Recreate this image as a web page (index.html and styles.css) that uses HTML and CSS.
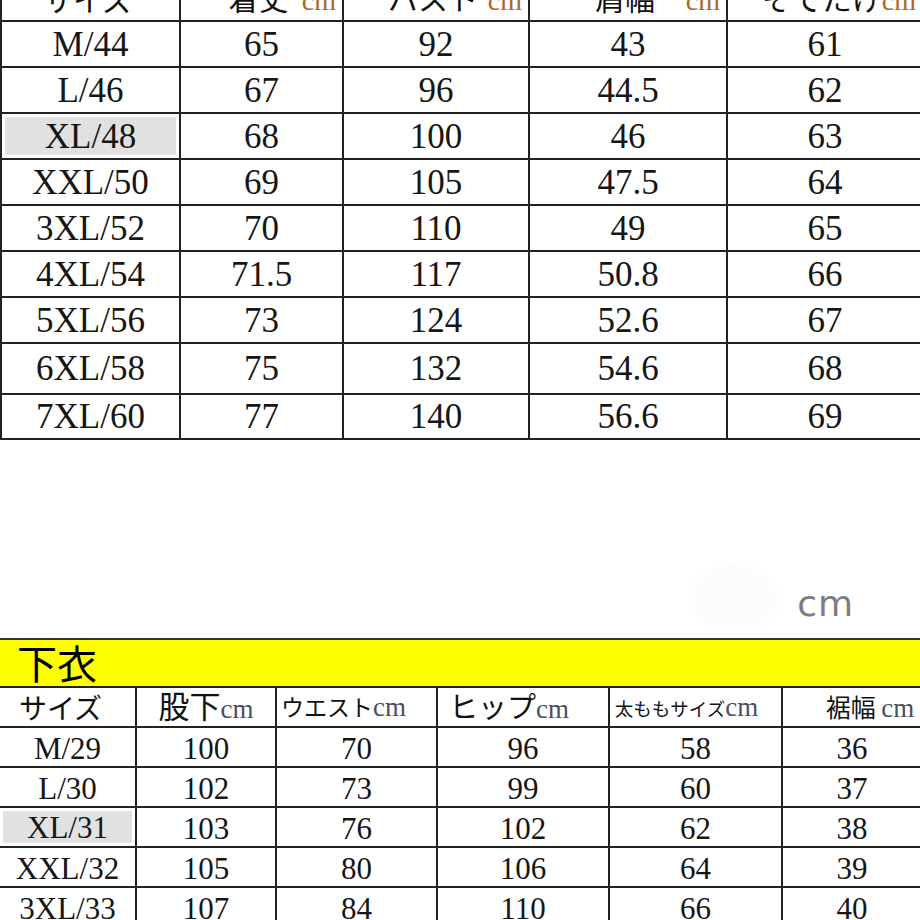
FILE: index.html
```html
<!DOCTYPE html>
<html lang="ja">
<head>
<meta charset="utf-8">
<title>サイズ表</title>
<link rel="stylesheet" href="styles.css">
</head>
<body>
<div class="page">
  <table class="chart chart-top">
    <colgroup>
      <col class="t1"><col class="t2"><col class="t3"><col class="t4"><col class="t5">
    </colgroup>
    <thead>
      <tr>
        <th><span class="hd"><span class="lbl">サイズ</span></span></th>
        <th><span class="hd"><span class="lbl">着丈</span><span class="unit">cm</span></span></th>
        <th><span class="hd"><span class="lbl">バスト</span><span class="unit">cm</span></span></th>
        <th><span class="hd"><span class="lbl">肩幅</span><span class="unit">cm</span></span></th>
        <th><span class="hd"><span class="lbl">そでたけ</span><span class="unit">cm</span></span></th>
      </tr>
    </thead>
    <tbody>
      <tr><td>M/44</td><td>65</td><td>92</td><td>43</td><td>61</td></tr>
      <tr><td>L/46</td><td>67</td><td>96</td><td>44.5</td><td>62</td></tr>
      <tr><td class="hl">XL/48</td><td>68</td><td>100</td><td>46</td><td>63</td></tr>
      <tr><td>XXL/50</td><td>69</td><td>105</td><td>47.5</td><td>64</td></tr>
      <tr><td>3XL/52</td><td>70</td><td>110</td><td>49</td><td>65</td></tr>
      <tr><td>4XL/54</td><td>71.5</td><td>117</td><td>50.8</td><td>66</td></tr>
      <tr><td>5XL/56</td><td>73</td><td>124</td><td>52.6</td><td>67</td></tr>
      <tr class="tall"><td>6XL/58</td><td>75</td><td>132</td><td>54.6</td><td>68</td></tr>
      <tr class="short"><td>7XL/60</td><td>77</td><td>140</td><td>56.6</td><td>69</td></tr>
    </tbody>
  </table>

  <div class="gap"><span class="gap-unit">cm</span></div>

  <div class="band">下衣</div>

  <table class="chart chart-bottom">
    <colgroup>
      <col class="b1"><col class="b2"><col class="b3"><col class="b4"><col class="b5"><col class="b6">
    </colgroup>
    <thead>
      <tr>
        <th class="h-size">サイズ</th>
        <th class="h-inseam">股下<span class="unit">cm</span></th>
        <th class="h-waist">ウエスト<span class="unit">cm</span></th>
        <th class="h-hip">ヒップ<span class="unit">cm</span></th>
        <th class="h-thigh">太ももサイズ<span class="unit">cm</span></th>
        <th class="h-hem">裾幅 <span class="unit">cm</span></th>
      </tr>
    </thead>
    <tbody>
      <tr><td>M/29</td><td>100</td><td>70</td><td>96</td><td>58</td><td>36</td></tr>
      <tr><td>L/30</td><td>102</td><td>73</td><td>99</td><td>60</td><td>37</td></tr>
      <tr><td class="hl">XL/31</td><td>103</td><td>76</td><td>102</td><td>62</td><td>38</td></tr>
      <tr><td>XXL/32</td><td>105</td><td>80</td><td>106</td><td>64</td><td>39</td></tr>
      <tr><td>3XL/33</td><td>107</td><td>84</td><td>110</td><td>66</td><td>40</td></tr>
    </tbody>
  </table>
</div>
</body>
</html>
```

FILE: styles.css
```css
html, body {
  margin: 0;
  padding: 0;
  background: #ffffff;
}

.page {
  width: 920px;
  height: 920px;
  overflow: hidden;
  background: #ffffff;
}

.chart {
  border-collapse: collapse;
  table-layout: fixed;
  color: #161616;
  font-family: "Liberation Serif", "Times New Roman", serif;
}

.chart th,
.chart td {
  border: 2px solid #222222;
  padding: 0;
  text-align: center;
  vertical-align: middle;
  white-space: nowrap;
  overflow: hidden;
  font-weight: normal;
}

.chart .hl {
  background: #e1e1e1;
  background-clip: content-box;
  padding: 3px;
}

.unit {
  font-family: "Liberation Serif", "Times New Roman", serif;
}

/* ---------- top table ---------- */
.chart-top {
  width: 922px;
  margin-top: -26px;
}

.t1 { width: 179px; }
.t2 { width: 163px; }
.t3 { width: 186px; }
.t4 { width: 198px; }
.t5 { width: 196px; }

.chart-top th {
  height: 44px;
  font-family: "Noto Sans CJK JP", "Noto Sans", sans-serif;
  font-size: 30px;
  line-height: 1;
  color: #111111;
}

.chart-top .hd {
  display: grid;
  grid-template-columns: 1fr auto 1fr;
  align-items: baseline;
  padding-right: 6px;
}

.chart-top .lbl {
  grid-column: 2;
}

.chart-top .hd .unit {
  grid-column: 3;
  justify-self: end;
  font-size: 28px;
  color: #a5692e;
}

.chart-top td {
  height: 44px;
  font-size: 35px;
  line-height: 1;
}

.chart-top td.hl { height: 38px; }
.chart-top tr.tall td { height: 49px; }
.chart-top tr.short td { height: 43px; }

/* ---------- gap ---------- */
.gap {
  height: 198px;
  display: flex;
  justify-content: flex-end;
  align-items: flex-end;
  padding: 0 66px 16px 0;
  box-sizing: border-box;
}

.gap-unit {
  position: relative;
  font-family: "DejaVu Sans", "Liberation Sans", sans-serif;
  font-size: 36px;
  line-height: 1;
  color: #7d7d7d;
  letter-spacing: 1px;
}

.gap-unit::before {
  content: "";
  position: absolute;
  left: -110px;
  top: -24px;
  width: 95px;
  height: 72px;
  border-radius: 50%;
  background: radial-gradient(ellipse at center, #fafafa 0%, #fbfbfb 50%, rgba(255,255,255,0) 75%);
}

/* ---------- yellow band ---------- */
.band {
  height: 46px;
  border-top: 2px solid #333333;
  background: #ffff00;
  font-family: "Noto Sans CJK JP", "Noto Sans", sans-serif;
  font-size: 40px;
  line-height: 44px;
  color: #000000;
  padding-left: 17px;
}

/* ---------- bottom table ---------- */
.chart-bottom {
  width: 922px;
}

.b1 { width: 136px; }
.b2 { width: 140px; }
.b3 { width: 161px; }
.b4 { width: 172px; }
.b5 { width: 173px; }
.b6 { width: 140px; }

.chart-bottom tr > :first-child {
  border-left: none;
}

.chart-bottom th {
  height: 38px;
  font-family: "Noto Sans CJK JP", "Noto Sans", sans-serif;
  color: #111111;
  line-height: 26px;
}

.chart-bottom th .unit {
  font-size: 27px;
  line-height: 1;
  color: #4a4d63;
}

.h-size { font-size: 28px; padding-right: 14px !important; }
.h-inseam { font-size: 31px; }
.h-waist { font-size: 23px; padding-right: 26px !important; }
.h-hip { font-size: 29px; padding-right: 28px !important; }
.h-thigh { font-size: 18.5px; padding-right: 18px !important; }
.h-hem { font-size: 25px; padding-left: 36px !important; }

.chart-bottom td {
  height: 35px;
  padding-top: 3px;
  font-size: 31px;
  line-height: 1;
}

.chart-bottom td.hl { height: 32px; }
```
